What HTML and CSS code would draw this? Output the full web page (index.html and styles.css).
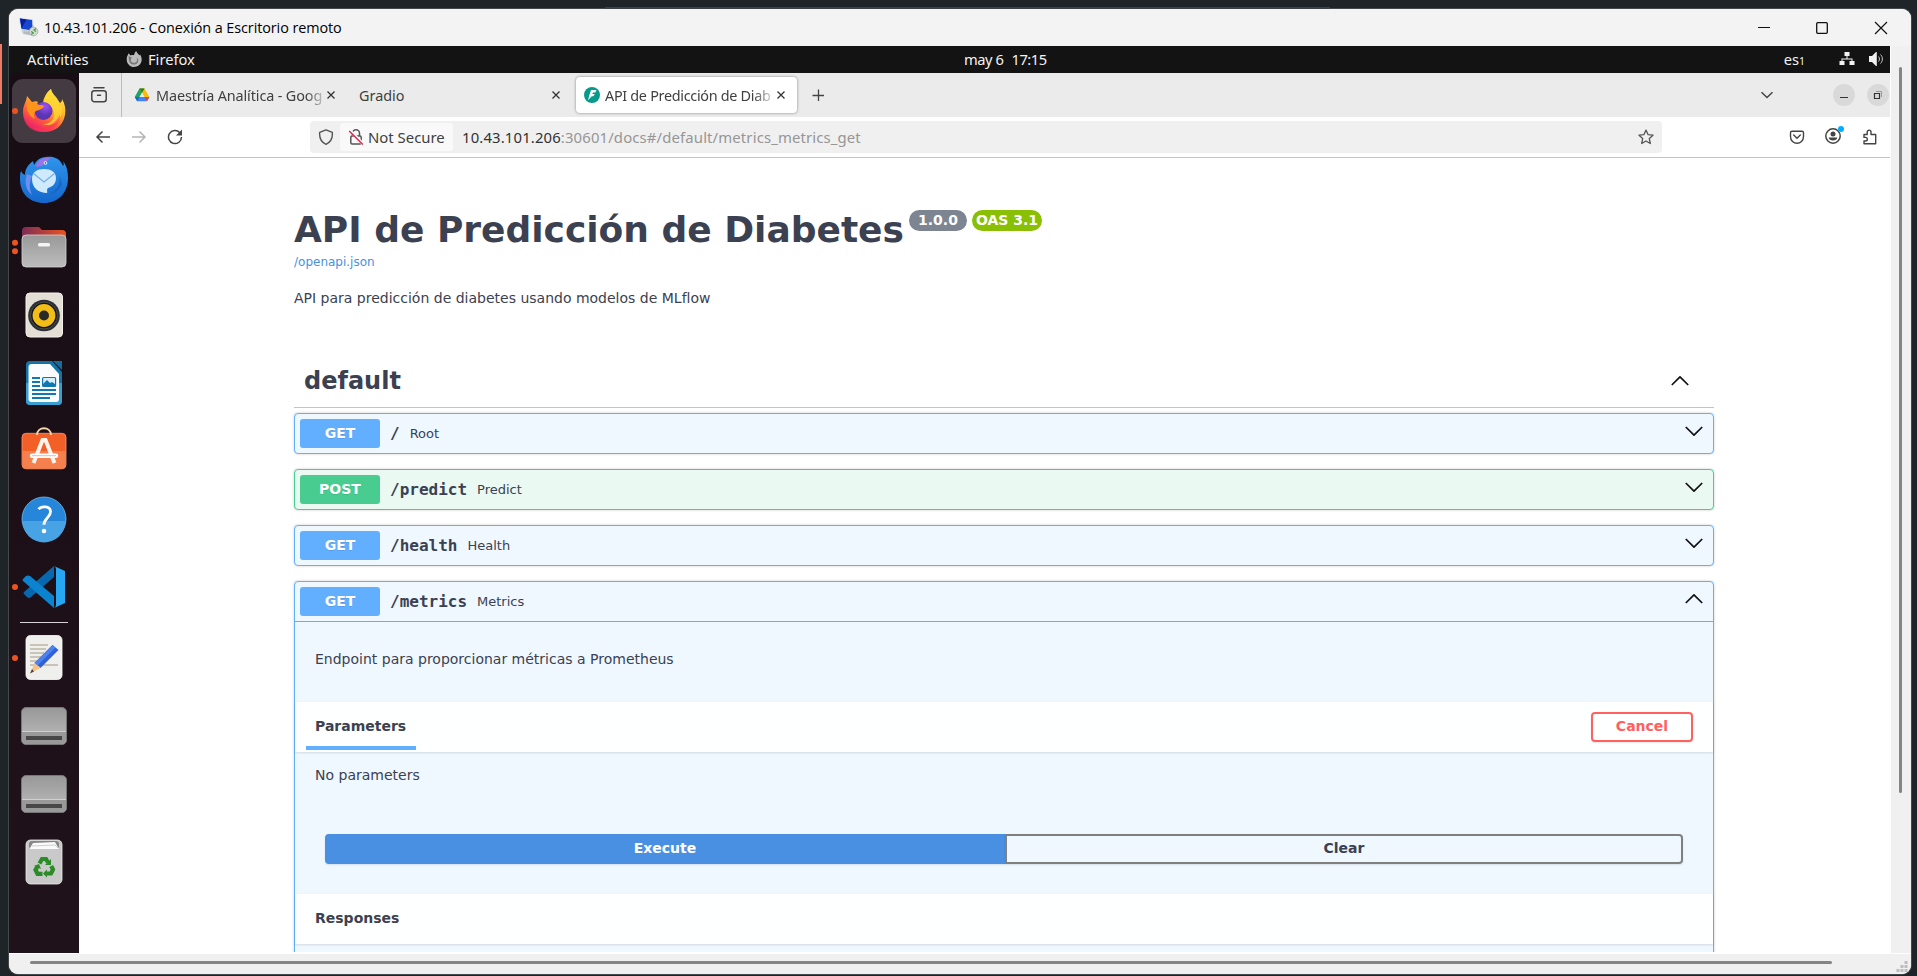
FILE: index.html
```html
<!DOCTYPE html>
<html lang="es">
<head>
<meta charset="utf-8">
<title>10.43.101.206 - Conexión a Escritorio remoto</title>
<link rel="stylesheet" href="styles.css">
</head>
<body>
<div class="desktop">
<div class="edge-accent"></div>
<div class="edge-line"></div>
<div class="window">
  <header class="titlebar">
    <svg class="rdp-icon" width="20" height="20" viewBox="0 0 20 20"><path d="M0 1l14 1.500 1 13-4 3-8-3z" fill="#c9d3dc"/><path d="M1 1.500l12 1.500 .5 10.500-11-1.800z" fill="#1747cf"/><path d="M1 1.500l6.500 1-5 9z" fill="#0a1f9c"/><path d="M5 14l5 1 1 3-7-1z" fill="#b5bcc0"/><circle cx="14.500" cy="14.500" r="4.400" fill="#d3dad2" stroke="#9aa59a" stroke-width=".7"/><path d="M12.300 14.500l2 1.500-2 1.500M17 11.500l-2 1.500 2 1.500" fill="none" stroke="#3d9b3d" stroke-width="1.200"/></svg>
    <span class="titlebar-text">10.43.101.206 - Conexión a Escritorio remoto</span>
    <div class="caption">
      <svg width="58" height="36" viewBox="0 0 58 36"><path d="M23 17.500h12" stroke="#111" fill="none"/></svg>
      <svg width="58" height="36" viewBox="0 0 58 36"><rect x="23.700" y="12.700" width="10.600" height="10.600" rx="1" stroke="#111" stroke-width="1.300" fill="none"/></svg>
      <svg width="59" height="36" viewBox="0 0 59 36"><path d="M24 12l12 12M36 12L24 24" stroke="#111" stroke-width="1.200" fill="none"/></svg>
    </div>
  </header>
  <div class="viewport">
    <div class="remote">
      <div class="topbar">
        <span class="activities">Activities</span>
        <svg class="top-fox" width="16" height="16" viewBox="0 0 42 42"><path d="M2 24C1 15 5 11 7 6l5 6c4-2 7-1 9-1 1-5 3-8 6-11 1 5 5 7 8 11l2-2c3 6 5 10 4 16-2 11-10 17-20 17S3 34 2 24z" fill="#bbb"/><path d="M7 13l9 5c-5 3-5 12 4 13 8 1 12-8 7-14 5 2 7 8 4 13-4 7-16 8-21 0-3-5-3-11-3-17z" fill="#777"/></svg>
        <span class="appname">Firefox</span>
        <span class="clock"><span>may 6</span><span>17:15</span></span>
        <span class="lang">es<span class="sub">1</span></span>
        <svg class="net" width="16" height="16" viewBox="0 0 16 16" fill="#f2f2f2"><path d="M5.500 1h5v4h-5zM.500 10h5v4h-5zM10.500 10h5v4h-5zM7.500 5h1v2.500h5V10h-1V8.500h-9V10h-1V7.500h5z"/></svg>
        <svg class="vol" width="16" height="16" viewBox="0 0 16 16"><path d="M1 5h3l4-4h.800v14H8l-4-4H1z" fill="#f2f2f2"/><path d="M10.500 5.500c1.300 1.500 1.300 3.500 0 5M12.500 3.500c2.500 2.500 2.500 6.500 0 9" fill="none" stroke="#ccc"/></svg>
      </div>
      <div class="session">
        <nav class="dock">
          <svg class="app" viewBox="0 0 70 68">
            <defs>
              <linearGradient id="fx" x1=".8" y1="0" x2=".25" y2="1"><stop offset="0" stop-color="#fff04a"/><stop offset=".38" stop-color="#ffb52c"/><stop offset=".68" stop-color="#ff5c3c"/><stop offset="1" stop-color="#e8117a"/></linearGradient>
              <radialGradient id="fp" cx=".6" cy=".25"><stop offset="0" stop-color="#a050f4"/><stop offset="1" stop-color="#5a35b4"/></radialGradient>
              <linearGradient id="tb" x1="0" y1="0" x2="0" y2="1"><stop offset="0" stop-color="#2f95ec"/><stop offset="1" stop-color="#1467cc"/></linearGradient>
              <linearGradient id="gr" x1="0" y1="0" x2="0" y2="1"><stop offset="0" stop-color="#989898"/><stop offset="1" stop-color="#bdbdbd"/></linearGradient>
              <linearGradient id="fo" x1="0" y1="0" x2="1" y2="0"><stop offset="0" stop-color="#7e2c56"/><stop offset="1" stop-color="#e95420"/></linearGradient>
            </defs>
            <rect x="3" y="2" width="64" height="64" rx="11" fill="#443a41"/><circle cx="6" cy="34" r="3" fill="#e95420"/>
            <path d="M14 35c0-7 3-9 4-16l5 6c3-1 5-1 6 0-1 2-1 3-1 4 2-1 4-2 6-2 0-6 4-12 8-15 1 5 5 7 7 11l2 3c2-1 2-3 2-4 3 5 4 10 3 16-2 11-10 17-21 17S14 46 14 35z" fill="url(#fx)"/>
            <path d="M42 12c-4 3-8 9-7 15 5 0 10 4 10 10 0 7-6 11-12 10 14 5 23-8 19-19l-2 3c1-8-7-11-8-19z" fill="#ffda32" opacity=".75"/>
            <circle cx="34.500" cy="34" r="9" fill="url(#fp)"/>
            <path d="M18 27c3-3 9-1 12 1 3 0 5 0 5 1-1 3-5 4-8 5-3 2-2 6-1 8-5-2-9-8-8-15z" fill="#ff9518"/><path d="M14 36c1 12 12 18 23 14 6-2 12-7 14-13 0 12-9 18-17 18-12 0-20-7-20-19z" fill="#fb3454" opacity=".55"/>
          </svg>
          <svg class="app" viewBox="0 0 70 68">
            <path d="M11 34c0 15 10 24 24 24s24-10 24-25c0-8-2-13-5-17 1 2 1 4 0 5-3-8-10-10-17-9-6 0-10 4-12 8l-1-4c-5 4-8 8-8 14-2-1-3-2-4-4-1 3-1 5-1 8z" fill="url(#tb)"/>
            <path d="M27 22c1-6 6-10 15-9-4 2-6 5-9 8z" fill="#9c74e8"/><circle cx="36.500" cy="18" r="1.800" fill="#e8f4ff"/><circle cx="36.500" cy="18" r=".8" fill="#234"/>
            <path d="M18 29c-3 9-1 16 5 21-3-7-3-13 0-19z" fill="#6f8ff0"/>
            <path d="M23 34c0-7 5-10 12-10s12 3 12 9c0 6-4 9-8 10-2 2 0 4-1 5-8 0-15-5-15-14z" fill="#cfeafc"/><path d="M24.500 28.500L35 37l10.500-8.500" fill="none" stroke="#73aee8" stroke-width="1.200"/><path d="M50 29c2 9-1 16-9 20 6-1 10-5 12-10" fill="#0f56b8" opacity=".5"/>
          </svg>
          <svg class="app" viewBox="0 0 70 68">
            <circle cx="6" cy="29.700" r="3" fill="#e95420"/><circle cx="6" cy="38.300" r="3" fill="#e95420"/>
            <path d="M13 18q0-4 4-4h13l3 3h20q4 0 4 4v15H13z" fill="url(#fo)"/><rect x="13" y="22" width="44" height="32" rx="4" fill="url(#gr)" stroke="#d2d2d2" stroke-width=".8"/><rect x="29" y="30" width="12" height="3.500" rx="1.500" fill="#f4f4f4"/>
          </svg>
          <svg class="app" viewBox="0 0 70 68">
            <rect x="17" y="12" width="36.500" height="44" rx="4" fill="#e3dfd5" stroke="#f4f1ea"/><circle cx="35" cy="34.500" r="15.800" fill="#2c3034"/><circle cx="35" cy="34.500" r="13.500" fill="#171717" stroke="#4b4e50" stroke-width="1"/><circle cx="35" cy="34.500" r="11.400" fill="#f3bd18"/><circle cx="35" cy="34.500" r="5" fill="#292929"/>
          </svg>
          <svg class="app" viewBox="0 0 70 68">
            <path d="M21 12h22l10 11v29q0 4-4 4H21q-4 0-4-4V16q0-4 4-4z" fill="#1474a8"/><path d="M17 34h36v18q0 4-4 4H21q-4 0-4-4z" fill="#3a9fd0"/><path d="M44 12h9v9z" fill="#166d9d"/><path d="M22.500 15h18.500l9 10v25q0 3-3 3H22.500q-3 0-3-3V18q0-3 3-3z" fill="#fafcfd"/><path d="M23 29h8M23 33h8M23 37h8M23 41h24M23 45h24M23 49h18" stroke="#1077b2" stroke-width="2"/><rect x="33.600" y="28.500" width="13" height="9" rx="1" fill="#d7effb" stroke="#1077b2" stroke-width="1.200"/><path d="M34 37v-2l4-4 3 3 2-1 3 2v2z" fill="#1077b2"/>
          </svg>
          <svg class="app" viewBox="0 0 70 68">
            <rect x="13" y="16.300" width="44" height="35.500" rx="4" fill="#f26027" stroke="#ff9770" stroke-width=".8"/><path d="M13.500 34h43v14q0 3.500-4 3.500h-35q-4 0-4-3.500z" fill="#f5804d"/><path d="M28 18c0-9 14-9 14 0" fill="none" stroke="#f5d6a6" stroke-width="1.800"/><path d="M24.500 46L33.500 23h3l9 23" fill="none" stroke="#fff3ed" stroke-width="4"/><path d="M23 38.700h24" stroke="#fff" stroke-width="4.500" stroke-linecap="round"/><path d="M23 38.700h24" stroke="#f4a37e" stroke-width=".8"/>
          </svg>
          <svg class="app" viewBox="0 0 70 68"><circle cx="35" cy="34" r="22" fill="#2586da" stroke="#77bbed" stroke-width=".8"/><path d="M13.500 36h43a21.500 21.500 0 0 1-43 0z" fill="#48a3e4"/><path d="M29.500 24.200c3-3.700 12-3.200 12 2.500 0 6-6.500 6-6.500 13" fill="none" stroke="#fff" stroke-width="2.800"/><circle cx="35" cy="46" r="2.300" fill="#fff"/></svg>
          <svg class="app" viewBox="0 0 70 68"><circle cx="6" cy="34" r="3" fill="#e95420"/><path d="M45 13v11L22 44q-2 2-4 0l-3-3q-1-1 0-2z" fill="#0768ad"/><path d="M14 28q-1-1 0-2l3-3q2-1 4 0l24 20v12z" fill="#0c83cf"/><path d="M45 13l11 5v32l-11 5q2-1 2-3V16q0-2-2-3z" fill="#27a7f3"/></svg>
          <div class="dock-sep"></div>
          <svg class="app" viewBox="0 0 70 68"><circle cx="6" cy="34" r="3" fill="#e95420"/><rect x="17" y="11.500" width="36" height="44" rx="4.500" fill="#efefed" stroke="#fff" stroke-width=".8"/><path d="M21 21h18M21 25h16M21 29h14M21 33h12M21 37h10M21 41h28" stroke="#c8c4b6" stroke-width="1.800"/><path d="M43.500 21l6 5-18 18-6-5z" fill="#2f62d8"/><path d="M43.500 21l3 2.500-18 18-3-2.500z" fill="#4d82ef"/><path d="M25.500 39l6 5-10 5z" fill="#f7c187"/><path d="M23 45l2 2.500-4 2z" fill="#51433a"/></svg>
          <svg class="app" viewBox="0 0 70 68"><rect x="12.500" y="15.500" width="45" height="37" rx="4.500" fill="url(#gr)" stroke="#777"/><path d="M13 39.500h44V48q0 4-4 4H17q-4 0-4-4z" fill="#999"/><path d="M13 39.500h44" stroke="#d0d0d0"/><path d="M17 44h36v4H17z" fill="#484848"/></svg>
          <svg class="app" viewBox="0 0 70 68"><rect x="12.500" y="15.500" width="45" height="37" rx="4.500" fill="url(#gr)" stroke="#777"/><path d="M13 39.500h44V48q0 4-4 4H17q-4 0-4-4z" fill="#999"/><path d="M13 39.500h44" stroke="#d0d0d0"/><path d="M17 44h36v4H17z" fill="#484848"/></svg>
          <svg class="app" viewBox="0 0 70 68"><rect x="17" y="12" width="36" height="44" rx="4.500" fill="#c9c9c9" stroke="#ececec" stroke-width=".8"/><rect x="20" y="13" width="30" height="8" rx="3" fill="#868686"/><path d="M21 20l3-5 22-1 4 7H21z" fill="#fafafa"/><path d="M23 18l23-1 3 3" stroke="#bbb" fill="none" stroke-width=".7"/>
            <g fill="none" stroke="#2b8b26" stroke-width="4.200"><path d="M30.500 35.500l2.500-4.500h4l2 3.500"/><path d="M42.200 38l1.800 3.500-2 4h-5"/><path d="M33.500 45.800h-5l-2-4 2-3.300"/></g><path d="M42 31v6h-6zM38 49.500v-8l-4 4zM32 41l-2-5-5 2z" fill="#2b8b26"/></svg>
        </nav>
        <div class="browser">
          <div class="tabs">
            <div class="recent"><svg width="18" height="18" viewBox="0 0 18 18" fill="none" stroke="#444" stroke-width="1.500" stroke-linecap="round"><path d="M4 1.800h10"/><rect x="1.800" y="4.800" width="14.400" height="10.900" rx="2.500"/><path d="M7.500 9.300h3"/></svg></div>
            <div class="tab tab-drive">
              <svg width="16" height="16" viewBox="0 0 16 16"><path d="M5.500 1.500h5L3.300 14 .8 9.700z" fill="#20a464"/><path d="M5.500 1.500h5l4.900 8.500h-5z" fill="#fbbc05"/><path d="M.8 10h14.500l-2.400 4.200H3.200z" fill="#4285f4"/><path d="M10.500 10h4.900L13 14.200z" fill="#ea4335"/><path d="M.8 10h4.800l-2.400 4.200z" fill="#1967d2"/><path d="M5.500 1.500L8 5.800l2.500-4.300z" fill="#188038"/><path d="M8 5.800L10.400 10H5.600z" fill="#ebebeb"/></svg>
              <span class="tab-label">Maestría Analítica - Goog</span>
              <svg class="x" viewBox="0 0 10 10"><path d="M1.500 1.500l7 7M8.500 1.500l-7 7"/></svg>
            </div>
            <div class="tab tab-gradio"><span class="tab-label">Gradio</span><svg class="x" viewBox="0 0 10 10"><path d="M1.500 1.500l7 7M8.500 1.500l-7 7"/></svg></div>
            <div class="tab tab-active">
              <svg width="16" height="16" viewBox="0 0 16 16"><circle cx="8" cy="8" r="8" fill="#069a8a"/><path d="M7 3h5.500l-1.200 2.600H9L8.300 7h2.400L9.500 9.200H7.800L4 13.300l1.300-5z" fill="#fff"/></svg>
              <span class="tab-label">API de Predicción de Diab</span>
              <svg class="x" viewBox="0 0 10 10"><path d="M1.500 1.500l7 7M8.500 1.500l-7 7"/></svg>
            </div>
            <svg class="plus" width="12" height="12" viewBox="0 0 12 12"><path d="M6.500 .5v12M.5 6.500h12" stroke="#444" stroke-width="1.300"/></svg>
            <svg class="alltabs" width="14" height="8" viewBox="0 0 14 8"><path d="M1.500 1.300L7 6.500l5.500-5.200" fill="none" stroke="#444" stroke-width="1.500"/></svg>
            <svg class="wmin" width="22" height="22" viewBox="0 0 22 22"><circle cx="11" cy="11" r="11" fill="#d9d9d9"/><path d="M7 13.500h8" stroke="#333"/></svg>
            <svg class="wmax" width="22" height="22" viewBox="0 0 22 22"><circle cx="11" cy="11" r="11" fill="#d9d9d9"/><path d="M7.500 9.500h5v5h-5z" stroke="#333" fill="none" stroke-width="1.200"/><path d="M9 7.500h5.500V13" stroke="#999" fill="none"/></svg>
          </div>
          <div class="navbar">
            <svg class="back" width="16" height="16" viewBox="0 0 16 16"><path d="M15 8H2M7.500 2.500L2 8l5.500 5.500" fill="none" stroke="#444" stroke-width="1.500"/></svg>
            <svg class="fwd" width="16" height="16" viewBox="0 0 16 16"><path d="M1 8h13M8.500 2.500L14 8l-5.500 5.500" fill="none" stroke="#b5b5b5" stroke-width="1.500"/></svg>
            <svg class="reload" width="16" height="16" viewBox="0 0 16 16"><path d="M12.800 3.700A6.500 6.500 0 1 0 14.500 8" fill="none" stroke="#444" stroke-width="1.500"/><path d="M15 .5v6H9z" fill="#444"/></svg>
            <div class="urlbar">
              <svg class="shield" width="16" height="16" viewBox="0 0 16 16"><path d="M8 .9l6.300 2.500c.5 5.200-1.300 9.600-6.300 11.900C3 13 1.200 8.600 1.700 3.400z" fill="none" stroke="#555" stroke-width="1.400" stroke-linejoin="round"/></svg>
              <div class="insecure"><svg width="16" height="16" viewBox="0 0 16 16"><path d="M4.500 7V4.300a3.500 3.500 0 0 1 7 0V7" fill="none" stroke="#555" stroke-width="1.500"/><rect x="2.800" y="7" width="10.400" height="8" rx="1.300" fill="none" stroke="#555" stroke-width="1.500"/><path d="M2 1.500L15.500 15.500" stroke="#f8f8f8" stroke-width="3"/><path d="M1.200 2L14.800 15.500" stroke="#e22850" stroke-width="1.500"/></svg><span>Not Secure</span></div>
              <span class="url"><b>10.43.101.206</b>:30601/docs#/default/metrics_metrics_get</span>
              <svg class="star" width="16" height="16" viewBox="0 0 16 16"><path d="M8 1.100l2 4.500 5 .6-3.700 3.300 1 5L8 12l-4.300 2.500 1-5L1 6.200l5-.6z" fill="none" stroke="#555" stroke-width="1.300" stroke-linejoin="round"/></svg>
            </div>
            <svg class="pocket" width="16" height="16" viewBox="0 0 16 16" fill="none" stroke="#444" stroke-width="1.400"><path d="M3 2.200h10q1.500 0 1.500 1.500V7.500c0 9-13 9-13 0V3.700q0-1.500 1.500-1.500z"/><path d="M4.700 6L8 9.200 11.300 6" stroke-linecap="round"/></svg>
            <svg class="account" width="20" height="20" viewBox="0 0 20 20"><circle cx="9" cy="11" r="7.200" fill="none" stroke="#444" stroke-width="1.500"/><circle cx="9" cy="9" r="2.500" fill="#444"/><path d="M4.700 12.500h8.600c0 4-8.600 4-8.600 0z" fill="#444"/><circle cx="17" cy="4" r="3" fill="#00adff"/></svg>
            <svg class="puzzle" width="16" height="16" viewBox="0 0 16 16"><path d="M2 5.500h3.200V3a1.900 1.900 0 0 1 3.800 0v2.500h4.700v9.200H2V12h1.500a1.800 1.800 0 0 0 0-3.600H2z" fill="none" stroke="#444" stroke-width="1.400" stroke-linejoin="round"/></svg>
          </div>
          <main class="page">
            <div class="swagger">
              <section class="info">
                <h1>API de Predicción de Diabetes</h1>
                <span class="ver">1.0.0</span><span class="ver oas">OAS 3.1</span>
              </section>
              <a class="spec">/openapi.json</a>
              <p class="about">API para predicción de diabetes usando modelos de MLflow</p>
              <div class="tag"><h2>default</h2><svg class="chev" viewBox="0 0 20 20"><path d="M1.800 14L10 5.800l8.200 8.200"/></svg></div>
              <div class="op get"><div class="summary"><span class="method">GET</span><span class="path">/</span><span class="desc">Root</span><svg class="chev" viewBox="0 0 20 20"><path d="M1.800 6L10 14.200 18.200 6"/></svg></div></div>
              <div class="op post"><div class="summary"><span class="method">POST</span><span class="path">/predict</span><span class="desc">Predict</span><svg class="chev" viewBox="0 0 20 20"><path d="M1.800 6L10 14.200 18.200 6"/></svg></div></div>
              <div class="op get"><div class="summary"><span class="method">GET</span><span class="path">/health</span><span class="desc">Health</span><svg class="chev" viewBox="0 0 20 20"><path d="M1.800 6L10 14.200 18.200 6"/></svg></div></div>
              <div class="op get open">
                <div class="summary"><span class="method">GET</span><span class="path">/metrics</span><span class="desc">Metrics</span><svg class="chev" viewBox="0 0 20 20"><path d="M1.800 14L10 5.800l8.200 8.200"/></svg></div>
                <p class="endpoint">Endpoint para proporcionar métricas a Prometheus</p>
                <div class="section-head"><div class="tab-head">Parameters</div><button class="btn cancel">Cancel</button></div>
                <p class="noparams">No parameters</p>
                <div class="actions"><button class="btn execute">Execute</button><button class="btn clear">Clear</button></div>
                <div class="section-head"><h4>Responses</h4></div>
              </div>
            </div>
          </main>
        </div>
      </div>
    </div>
    <div class="vscroll"><div class="vthumb"></div></div>
  </div>
  <div class="hscroll"><div class="hthumb"></div><svg class="grip" width="12" height="12" viewBox="0 0 12 12" fill="#bdbdbd"><path d="M8.500 0h3v3h-3zM4.500 4h3v3h-3zM8.500 4h3v3h-3zM.5 8h3v3h-3zM4.500 8h3v3h-3zM8.500 8h3v3h-3z"/></svg></div>
</div>
</div>
</body>
</html>
```

FILE: styles.css
```css
* { box-sizing: border-box; }
body { margin: 0; overflow: hidden; }
h1, h2, h4, p { margin: 0; }
svg { flex: none; display: block; }

.desktop { position: relative; width: 1917px; height: 976px; padding: 9px 6px 2px 9px; background: #1f2429; overflow: hidden; }
.edge-accent { position: absolute; left: 0; top: 44px; width: 2px; height: 60px; background: #ef7a63; }
.edge-line { position: absolute; left: 605px; top: 7px; width: 725px; height: 2px; background: #3b4145; }

.window { width: 1902px; height: 965px; border-radius: 9px; overflow: hidden; background: #f0f0f0; box-shadow: 0 0 0 1px #44484b; display: flex; flex-direction: column; }
.titlebar { height: 37px; background: #f3f3f3; display: flex; align-items: center; padding-left: 10px; }
.rdp-icon { margin-top: -1px; }
.titlebar-text { margin-left: 5px; margin-top: -1px; font: 14.400px "Open Sans", sans-serif; letter-spacing: -.08px; color: #000; white-space: nowrap; }
.caption { display: flex; margin-left: auto; padding-right: 1px; }

.viewport { display: flex; height: 907px; }
.remote { width: 1881px; font-family: "Noto Sans", sans-serif; }
.topbar { position: relative; height: 27px; background: #131313; color: #f2f2f2; display: flex; align-items: center; font-size: 14.700px; padding: 0 0 1px 18px; white-space: nowrap; }
.activities { width: 99px; letter-spacing: .05px; }
.appname { margin-left: 6px; }
.clock { position: absolute; left: 955px; top: 3px; line-height: 20px; display: flex; gap: 8px; letter-spacing: -.45px; }
.lang { margin-left: auto; margin-right: 34px; }
.sub { font-size: 10.500px; }
.net { margin-right: 13px; }
.vol { margin-right: 6px; }

.session { display: flex; height: 880px; }
.dock { width: 70px; background: linear-gradient(#180d15, #20121a); padding-top: 4px; }
.app { width: 70px; height: 68px; }
.dock-sep { height: 3px; margin: 0 11px; border-top: 1px solid transparent; background: linear-gradient(#d5d1d4, #d5d1d4) 0 0 / 100% 1px no-repeat; }

.browser { width: 1811px; background: #fff; display: flex; flex-direction: column; }
.tabs { height: 44px; background: #ebebeb; display: flex; align-items: center; font-size: 14.400px; color: #404040; }
.recent { width: 43px; height: 44px; border-right: 1px solid #bdbdbd; display: flex; align-items: center; padding-left: 11px; }
.tab { display: flex; align-items: center; height: 36px; }
.tab-label { white-space: nowrap; }
.x { width: 10px; height: 10px; fill: none; stroke: #333; stroke-width: 1.300; }
.tab-drive { width: 237px; padding-left: 12px; }
.tab-drive .tab-label { width: 168px; margin-left: 6px; letter-spacing: -.12px; margin-right: 2px; -webkit-mask-image: linear-gradient(90deg, #000 150px, transparent 172px); }
.tab-gradio { width: 217px; }
.tab-gradio .tab-label { width: 192px; }
.tab-active { width: 221px; background: #fff; border-radius: 4px; box-shadow: 0 0 3px rgba(0,0,0,.45); padding-left: 8px; }
.tab-active .tab-label { width: 169px; margin-left: 5px; margin-right: 2px; letter-spacing: -.3px; -webkit-mask-image: linear-gradient(90deg, #000 148px, transparent 172px); }
.plus { margin-left: 15px; }
.alltabs { margin-left: auto; margin-right: 59px; }
.wmin { margin-right: 12px; }
.wmax { margin-right: 1px; }

.navbar { height: 41px; border-bottom: 1px solid #c4c4c4; display: flex; align-items: center; padding: 0 12px 0 16px; font-size: 14.900px; color: #404040; }
.fwd { margin-left: 20px; }
.reload { margin-left: 20px; }
.urlbar { width: 1352px; height: 32px; margin-left: 127px; background: #f0f0f0; border-radius: 4px; display: flex; align-items: center; padding-left: 8px; }
.insecure { width: 113px; height: 28px; margin-left: 6px; background: #f9f9f9; border-radius: 3px; display: flex; align-items: center; padding-left: 8px; gap: 4px; white-space: nowrap; }
.url { margin-left: 9px; color: #969696; white-space: nowrap; letter-spacing: .13px; }
.url b { font-weight: 400; color: #333; }
.star { margin-left: auto; margin-right: 8px; }
.pocket { margin-left: 127px; }
.account { margin-left: 19px; margin-top: -4px; }
.puzzle { margin-left: auto; }

.page { height: 795px; overflow: hidden; font-family: "DejaVu Sans", sans-serif; color: #3b4151; border-bottom: 1px solid transparent; }
.swagger { width: 1420px; margin-left: 215px; padding-top: 51px; }
.info { display: flex; height: 43px; align-items: flex-start; }
.info h1 { font-size: 36px; line-height: 42px; white-space: nowrap; }
.ver { width: 58px; height: 21px; margin: 1px 5px 0 5px; border-radius: 57px; background: #7d8492; color: #fff; font: bold 14px/21px "DejaVu Sans", sans-serif; text-align: center; white-space: nowrap; }
.oas { width: 70px; background: #89bf04; margin-left: 0; }
.spec { display: block; font-size: 12px; line-height: 20px; color: #4990e2; }
.about { font-size: 14px; line-height: 20px; padding-top: 16px; height: 76px; }
.tag { height: 60px; border-bottom: 1px solid #c3c4c8; display: flex; align-items: center; padding: 7px 24px 0 10px; margin-bottom: 5px; }
.tag h2 { font-size: 24px; line-height: 32px; flex: 1; }
.chev { width: 20px; height: 20px; fill: none; stroke: #111; stroke-width: 1.700; stroke-linejoin: round; }
.op { height: 41px; margin-bottom: 15px; border: 1px solid #61affe; border-radius: 4px; background: #eff7ff; box-shadow: 0 0 3px rgba(0,0,0,.19); }
.post { border-color: #49cc90; background: #ebf9f3; }
.summary { height: 39px; display: flex; align-items: center; padding: 0 9px 0 5px; }
.summary .chev { margin: -5px 0 0 auto; }
.method { width: 80px; height: 29px; border-radius: 3px; background: #61affe; color: #fff; font-weight: bold; font-size: 14px; line-height: 29px; text-align: center; text-shadow: 0 1px 0 rgba(0,0,0,.1); }
.post .method { background: #49cc90; }
.path { margin-left: 10px; font: bold 16px/24px "DejaVu Sans Mono", monospace; }
.desc { margin-left: 10px; font-size: 13px; }
.open { height: 420px; }
.open .summary { height: 40px; border-bottom: 1px solid #61affe; }
.endpoint { font-size: 14px; height: 80px; line-height: 20px; padding: 27px 16px 0; }
.endpoint, .noparams { padding-left: 20px; }
.section-head { height: 50px; display: flex; align-items: center; padding: 0 20px 0 11px; background: rgba(255,255,255,.92); box-shadow: 0 1px 2px rgba(0,0,0,.12); font-size: 14px; font-weight: bold; }
.section-head h4 { padding-left: 9px; line-height: 20px; margin-bottom: 3px; font-size: 14px; }
.tab-head { width: 110px; height: 38px; margin-top: 8px; padding-left: 9px; line-height: 26px; border-bottom: 4px solid #61affe; padding-top: 1px; }
.btn { font: bold 14px/20px "DejaVu Sans", sans-serif; height: 30px; padding: 0 0 3px; border-radius: 4px; background: transparent; box-shadow: 0 1px 2px rgba(0,0,0,.1); color: #3b4151; border: 2px solid gray; }
.cancel { width: 102px; margin-left: auto; color: #ff6060; border-color: #ff6060; }
.noparams { height: 82px; padding-top: 13px; font-size: 14px; line-height: 20px; }
.actions { display: flex; padding: 0 30px; height: 60px; }
.execute { width: 680px; background: #4990e2; border-color: #4990e2; color: #fff; border-radius: 4px 0 0 4px; }
.clear { flex: 1; border-radius: 0 4px 4px 0; }

.vscroll { width: 21px; border-left: 1px solid #fff; background: #f0f0f0; padding: 21px 0 0 8px; }
.vthumb { width: 3px; height: 726px; border-radius: 2px; background: #858585; }
.hscroll { height: 21px; border-top: 1px solid #fff; background: #f0f0f0; display: flex; align-items: flex-start; padding: 7px 3px 0 21px; }
.hthumb { width: 1802px; height: 3px; border-radius: 2px; background: #858585; }
.grip { margin-left: auto; }
```
